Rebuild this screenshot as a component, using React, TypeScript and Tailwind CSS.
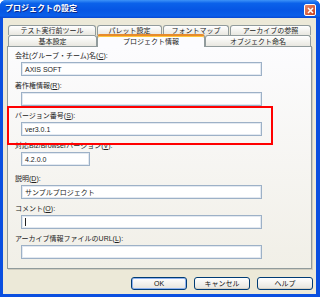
import React from 'react';

const font = { fontFamily: '"Liberation Sans", "Noto Sans CJK JP", sans-serif' };

type Field = { label: React.ReactNode; value?: string; small?: boolean; cursor?: boolean; mt: string };

const Key: React.FC<{ k: string }> = ({ k }) => <span className="underline">{k}</span>;

const fields: Field[] = [
  { label: <>会社(グループ・チーム)名(<Key k="C" />):</>, value: 'AXIS SOFT', mt: 'mt-0' },
  { label: <>著作権情報(<Key k="R" />):</>, mt: 'mt-[5px]' },
  { label: <>バージョン番号(<Key k="S" />):</>, value: 'ver3.0.1', mt: 'mt-[5px]' },
  { label: <>対応Biz/Browserバージョン(<Key k="V" />):</>, value: '4.2.0.0', small: true, mt: 'mt-[5px]' },
  { label: <>説明(<Key k="D" />):</>, value: 'サンプルプロジェクト', mt: 'mt-[8px]' },
  { label: <>コメント(<Key k="O" />):</>, cursor: true, mt: 'mt-[5px]' },
  { label: <>アーカイブ情報ファイルのURL(<Key k="L" />):</>, mt: 'mt-[5px]' },
];

const Tab: React.FC<{ label: string; w: string }> = ({ label, w }) => (
  <div
    className={`${w} h-full flex items-center justify-center border border-b-0 border-[#919b9c] rounded-t-[3px] bg-gradient-to-b from-[#ffffff] to-[#e8e7e0] text-[7px] leading-none text-[#222]`}
  >
    {label}
  </div>
);

const Button: React.FC<{ label: string; isDefault?: boolean }> = ({ label, isDefault }) => (
  <button
    className={`w-[56px] h-[13px] rounded-[3px] border border-[#003c74] bg-gradient-to-b from-[#ffffff] to-[#e6e4dc] text-[7px] leading-none text-[#111] ${
      isDefault ? 'shadow-[inset_0_0_0_1px_#8fb2ef]' : 'shadow-[inset_0_-1px_0_#d6d0c5]'
    }`}
  >
    {label}
  </button>
);

export default function App() {
  return (
    <div className="w-[320px] h-[297px] overflow-hidden rounded-t-[6px] bg-[#0a4fe0] flex flex-col" style={font}>
      <div className="h-[18px] shrink-0 flex items-start justify-between pl-[5px] pr-[4px] bg-[linear-gradient(to_bottom,#3d93f8_0%,#0b62ea_18%,#0656e4_55%,#0a5ee9_88%,#0847d2_100%)]">
        <span className="mt-[4px] text-[8px] font-bold text-white leading-[10px] [text-shadow:1px_1px_0_#0a2a8a]">
          プロジェクトの設定
        </span>
        <div className="mt-[4px] w-[12px] h-[12px] rounded-[2px] border border-white bg-gradient-to-br from-[#e98a6b] to-[#c73a16] flex items-center justify-center">
          <svg width="7" height="7" viewBox="0 0 7 7">
            <path d="M1 1 L6 6 M6 1 L1 6" stroke="white" strokeWidth="1.5" />
          </svg>
        </div>
      </div>

      <div className="flex-1 ml-[3px] mr-[4px] mb-[3px] bg-[#ece9d8] flex flex-col">
        <div className="pt-[7px] pl-[5px] flex flex-col">
          <div className="h-[10px] flex gap-[1px]">
            <Tab label="テスト実行前ツール" w="w-[88px]" />
            <Tab label="パレット設定" w="w-[65px]" />
            <Tab label="フォントマップ" w="w-[66px]" />
            <Tab label="アーカイブの参照" w="w-[81px]" />
          </div>
          <div className="h-[11px] flex items-end">
            <Tab label="基本設定" w="w-[89px]" />
            <div className="relative z-10 w-[108px] h-[13px] mb-[-1px] flex items-center justify-center border-x border-[#919b9c] border-t-2 border-t-[#e68b2c] rounded-t-[3px] bg-[#fcfcfe] text-[7px] leading-none text-[#222] shadow-[inset_0_1px_0_#ffc73c]">
              プロジェクト情報
            </div>
            <Tab label="オブジェクト命名" w="w-[106px]" />
          </div>
        </div>

        <div className="relative ml-[4px] w-[305px] h-[223px] border border-[#919b9c] bg-gradient-to-b from-[#fcfcfe] to-[#f1efe7] shadow-[1px_1px_0_#d0cdc0] pt-[4px] pl-[7px] flex flex-col">
          {fields.map((f, i) => (
            <div key={i} className={`${f.mt} flex flex-col`}>
              <div className="h-[10px] text-[7px] leading-[10px] text-[#222] whitespace-nowrap">{f.label}</div>
              <div
                className={`${f.small ? 'w-[69px]' : 'w-[241px]'} ml-[6px] mt-[1px] h-[14px] border border-[#9db1c7] bg-white shadow-[inset_0_0_0_1px_#e3e9f1] pl-[3px] flex items-center text-[7px] leading-none text-[#222]`}
              >
                {f.value}
                {f.cursor && <span className="w-[1px] h-[8px] bg-[#222]" />}
              </div>
            </div>
          ))}
          <div className="absolute left-[-1px] top-[59px] w-[266px] h-[39px] border-2 border-[#ff0000]" />
        </div>

        <div className="mt-[8px] pr-[3px] flex justify-end gap-[7px]">
          <Button label="OK" isDefault />
          <Button label="キャンセル" />
          <Button label="ヘルプ" />
        </div>
      </div>
    </div>
  );
}
